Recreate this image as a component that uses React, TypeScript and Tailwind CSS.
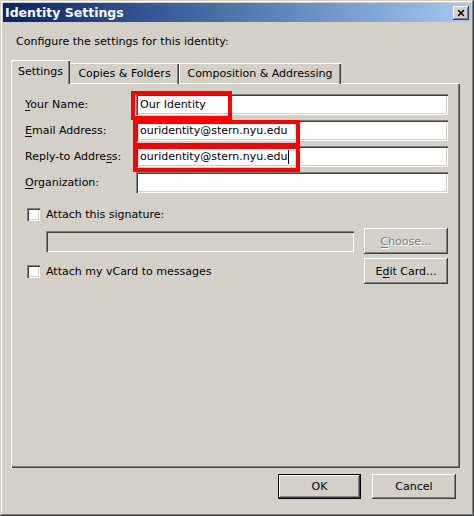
import React from 'react';
import { X } from 'lucide-react';

const raised =
  'shadow-[inset_-1px_-1px_#404040,inset_1px_1px_#ffffff,inset_-2px_-2px_#808080]';
const sunken =
  'shadow-[inset_1px_1px_#808080,inset_2px_2px_#404040,inset_-1px_-1px_#ffffff,inset_-2px_-2px_#d4d0c8]';

const Field = ({ label, value, caret }: { label: [string, string, string]; value?: string; caret?: boolean }) => (
  <div className="flex items-center h-[21px]">
    <label className="w-[111px] shrink-0">
      {label[0]}
      <span className="underline underline-offset-2">{label[1]}</span>
      {label[2]}
    </label>
    <div className={`w-[312px] h-[21px] bg-white ${sunken} flex items-center pl-[4px]`}>
      <span>{value}</span>
      {caret && <span className="w-px h-[14px] bg-black ml-[1px]" />}
    </div>
  </div>
);

const Checkbox = ({ text }: { text: string }) => (
  <div className="flex items-center">
    <span className={`w-[13px] h-[13px] bg-white ml-[16px] ${sunken}`} />
    <span className="ml-[6px]">{text}</span>
  </div>
);

export default function App() {
  return (
    <div
      className="relative w-[474px] h-[516px] bg-[#d4d0c8] p-[3px] flex flex-col text-[11px] leading-[13px] text-black shadow-[inset_-1px_-1px_#404040,inset_1px_1px_#d4d0c8,inset_-2px_-2px_#808080,inset_2px_2px_#ffffff]"
      style={{ fontFamily: '"DejaVu Sans", Tahoma, sans-serif' }}
    >
      {/* title bar */}
      <div className="h-[19px] flex items-center justify-between bg-gradient-to-r from-[#0a246a] to-[#a6caf0] pl-[2px] pr-[2px]">
        <span className="text-white font-bold text-[12.5px]">Identity Settings</span>
        <button className={`w-[16px] h-[14px] bg-[#d4d0c8] ${raised} flex items-center justify-center`}>
          <X className="w-[10px] h-[10px]" strokeWidth={3.5} />
        </button>
      </div>

      <p className="mt-[13px] ml-[13px]">Configure the settings for this identity:</p>

      {/* tabs */}
      <div className="mt-[12px] ml-[8px] flex items-end h-[24px] relative z-10">
        <div className="w-[59px] h-[24px] bg-[#d4d0c8] shadow-[inset_1px_1px_#ffffff,inset_-1px_0_#404040,inset_-2px_0_#808080] flex items-center justify-center pb-[1px] rounded-tl-[2px]">
          Settings
        </div>
        <div className="w-[109px] h-[21px] shadow-[inset_0_1px_#ffffff,inset_-1px_0_#404040,inset_-2px_0_#808080] flex items-center justify-center">
          Copies &amp; Folders
        </div>
        <div className="w-[162px] h-[21px] shadow-[inset_1px_1px_#ffffff,inset_-1px_0_#404040,inset_-2px_0_#808080] flex items-center justify-center">
          Composition &amp; Addressing
        </div>
      </div>

      {/* panel */}
      <div className="ml-[8px] w-[449px] h-[385px] -mt-px shadow-[inset_1px_1px_#ffffff,inset_-1px_-1px_#404040,inset_-2px_-2px_#808080] pt-[11px] pl-[14px]">
        <div className="flex flex-col gap-[5px]">
          <Field label={['', 'Y', 'our Name:']} value="Our Identity" />
          <Field label={['', 'E', 'mail Address:']} value="ouridentity@stern.nyu.edu" />
          <Field label={['Reply-to Addre', 's', 's:']} value="ouridentity@stern.nyu.edu" caret />
          <Field label={['', 'O', 'rganization:']} />
        </div>

        <div className="mt-[15px] -ml-[14px]">
          <Checkbox text="Attach this signature:" />
        </div>

        <div className="mt-[7px] flex items-center h-[26px]">
          <div className={`ml-[21px] w-[308px] h-[21px] ${sunken}`} />
          <button className={`ml-[10px] w-[84px] h-[26px] ${raised} text-[#808080] [text-shadow:1px_1px_#ffffff]`}>
            <span className="underline underline-offset-2">C</span>hoose...
          </button>
        </div>

        <div className="mt-[4px] flex items-center justify-between h-[26px] -ml-[14px] w-[437px]">
          <Checkbox text="Attach my vCard to messages" />
          <button className={`w-[84px] h-[26px] ${raised}`}>
            E<span className="underline underline-offset-2">d</span>it Card...
          </button>
        </div>
      </div>

      {/* dialog buttons */}
      <div className="mt-[6px] flex justify-end gap-[11px] pr-[15px]">
        <button className="w-[83px] h-[25px] border border-black">
          <div className={`w-full h-full ${raised} flex items-center justify-center`}>OK</div>
        </button>
        <button className={`w-[84px] h-[25px] ${raised}`}>Cancel</button>
      </div>

      {/* red annotation boxes */}
      <div className="absolute left-[131px] top-[91px] w-[101px] h-[29px] border-[4px] border-[#ff0000]" />
      <div className="absolute left-[133px] top-[120px] w-[167px] h-[27px] border-[4px] border-[#ff0000]" />
      <div className="absolute left-[133px] top-[145px] w-[167px] h-[27px] border-[4px] border-[#ff0000]" />
    </div>
  );
}
